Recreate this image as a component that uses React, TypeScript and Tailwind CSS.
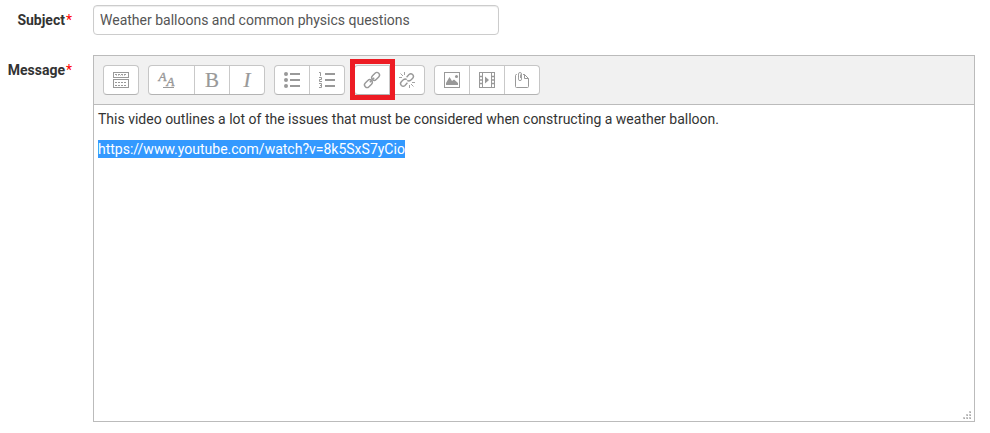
import React from "react";

function Icon({ children }: { children: React.ReactNode }) {
  return (
    <svg width="16" height="16" viewBox="0 0 16 16" fill="none" stroke="#999" className="block shrink-0 overflow-visible">
      {children}
    </svg>
  );
}

function Group({ children }: { children: React.ReactNode }) {
  return (
    <div className="flex h-[30px] divide-x divide-[#c9c9c9] overflow-hidden rounded-[4px] border border-[#c6c6c6] border-b-[#b3b3b3] bg-white">
      {children}
    </div>
  );
}

function Tool({ label, wide, children }: { label: string; wide?: boolean; children: React.ReactNode }) {
  return (
    <button
      type="button"
      aria-label={label}
      className={`box-content flex h-full items-center ${wide ? "w-[36px] pl-[9px]" : "w-[25px] pl-[9px]"}`}
    >
      {children}
    </button>
  );
}

const chain = (
  <g strokeWidth="1.4">
    <rect x="-4.4" y="-2.6" width="8.8" height="5.2" rx="2.6" transform="translate(4.4 11.6) rotate(-45)" />
    <rect x="-4.4" y="-2.6" width="8.8" height="5.2" rx="2.6" transform="translate(11.6 4.4) rotate(-45)" />
    <path d="M5.8 10.2 10.2 5.8" />
  </g>
);

export default function App() {
  return (
    <div className="h-[433px] w-[990px] overflow-hidden bg-white pt-[5px] font-[Roboto,sans-serif] text-[14px] leading-5 text-[#333]">
      <div className="flex">
        <label className="w-[93px] pt-[5px] pr-[21px] text-right font-bold">
          Subject<span className="ml-[1px] font-normal text-[#f00]">*</span>
        </label>
        <div className="h-[30px] w-[406px] rounded-[4px] border border-[#ccc] px-[6px] py-[4px] text-[#555] shadow-[inset_0_1px_1px_rgba(0,0,0,0.075)]">
          Weather balloons and common physics questions
        </div>
      </div>
      <div className="mt-5 flex">
        <label className="w-[93px] pt-[5px] pr-[21px] text-right font-bold">
          Message<span className="ml-[1px] font-normal text-[#f00]">*</span>
        </label>
        <div className="flex h-[367px] w-[882px] flex-col border border-[#bbb]">
          <div className="flex h-[49px] gap-[9px] border-b border-[#bbb] bg-[#f1f1f1] pt-[9px] pl-[9px]">
            <Group>
              <Tool label="Show more buttons">
                <Icon>
                  <rect x=".5" y=".5" width="15" height="5" />
                  <rect x=".5" y="7.5" width="15" height="8" />
                  <path d="M2 2.5H14M2 10.5H14M2 13.5H14" strokeDasharray="2 1" />
                  <path d="M3 3.5H13" strokeDasharray="1 1" opacity=".5" />
                </Icon>
              </Tool>
            </Group>
            <Group>
              <Tool label="Paragraph styles" wide>
                <Icon>
                  <g fill="#999" strokeWidth=".4" fontFamily="Liberation Serif, serif" fontStyle="italic" fontSize="13">
                    <text x="0.5" y="9">A</text>
                    <text x="8.45" y="14">A</text>
                  </g>
                  <path d="M5 15.5H16" />
                </Icon>
              </Tool>
              <Tool label="Bold">
                <Icon>
                  <text x="1" y="15.4" fill="#999" strokeWidth=".2" fontFamily="Liberation Serif, serif" fontSize="21">B</text>
                </Icon>
              </Tool>
              <Tool label="Italic">
                <Icon>
                  <text x="4.5" y="15.4" fill="#999" strokeWidth=".2" fontFamily="Liberation Serif, serif" fontStyle="italic" fontSize="21">I</text>
                </Icon>
              </Tool>
            </Group>
            <Group>
              <Tool label="Unordered list">
                <Icon>
                  <g fill="#999" stroke="none">
                    <circle cx="2" cy="2" r="2" />
                    <circle cx="2" cy="8" r="2" />
                    <circle cx="2" cy="14" r="2" />
                  </g>
                  <path d="M6 2H16M6 8H16M6 14H16" strokeWidth="2" />
                </Icon>
              </Tool>
              <Tool label="Ordered list">
                <Icon>
                  <path d="M0 .5H1.5V4M0 5.5H2.5V7.5H.5V9.5H3M0 11.5H2.5V15.5H0M1 13.5H2.5" />
                  <path d="M6 2H16M6 8H16M6 14H16" strokeWidth="2" />
                </Icon>
              </Tool>
            </Group>
            <div className="relative">
              <Group>
                <Tool label="Link"><Icon>{chain}</Icon></Tool>
                <Tool label="Unlink">
                  <Icon>
                    <path
                      d="M7.6 5.2 10 2.6Q11.8.9 13.6 2.5 15.4 4.3 13.7 6.2L11.4 8.4Q9.8 9.6 8.3 8.4M8.4 10.8 6 13.4Q4.2 15.1 2.4 13.5.6 11.7 2.3 9.8L4.6 7.6Q6.2 6.4 7.7 7.6"
                      strokeWidth="1.4"
                    />
                    <path d="M5.5 0V3M1.5 1.5 4 4M0 5.5H3M10.5 13V16M12 12 14.5 14.5M13 10.5H16" strokeWidth=".9" />
                  </Icon>
                </Tool>
              </Group>
              <div className="absolute -top-[6px] -left-[4px] h-[41px] w-[45px] border-[5px] border-[#ed1c24]" />
            </div>
            <Group>
              <Tool label="Image">
                <Icon>
                  <rect x=".5" y=".5" width="15" height="15" />
                  <path d="M2 13V11L5.5 5 8 9 10 7.5 14 11V13Z" fill="#999" stroke="none" />
                  <circle cx="12.5" cy="4.5" r="1.5" fill="#999" stroke="none" />
                </Icon>
              </Tool>
              <Tool label="Media">
                <Icon>
                  <path d="M.5 0V16M3.5 0V16M12.5 0V16M15.5 0V16M0 .5H16M0 15.5H16" />
                  <path d="M1 4.5H3M1 8H3M1 11.5H3M13 4.5H15M13 8H15M13 11.5H15" strokeWidth="1.3" />
                  <path d="M6 4.5V11.5L10 8Z" fill="#999" stroke="none" />
                </Icon>
              </Tool>
              <Tool label="Manage files">
                <Icon>
                  <path d="M3 2.5H2.5Q1.5 2.5 1.5 3.5V14.5Q1.5 15.5 2.5 15.5H13.5Q14.5 15.5 14.5 14.5V6.5L10.5 2.5H9M10.5 2.5V6.5H14.5" />
                  <path d="M4.5 4V7Q4.5 8.7 6 8.7T7.5 7V2Q7.5.5 6 .5T4.5 2V5M6.5 2.5V6" strokeWidth=".9" />
                </Icon>
              </Tool>
            </Group>
          </div>
          <div className="relative flex-1 px-[4px] pt-[4px]">
            <p>This video outlines a lot of the issues that must be considered when constructing a weather balloon.</p>
            <p className="mt-[11px] flex">
              <span className="h-[18px] bg-[#3399ff] leading-[18px] text-white">https://www.youtube.com/watch?v=8k5SxS7yCio</span>
            </p>
            <svg width="8" height="8" viewBox="0 0 8 8" className="absolute right-[3px] bottom-[2px]">
              <path d="M6 0h2v2H6zM3 3h2v2H3zM6 3h2v2H6zM0 6h2v2H0zM3 6h2v2H3zM6 6h2v2H6z" fill="#c8c8c8" />
              <path d="M7 1h1v1H7zM4 4h1v1H4zM7 4h1v1H7zM1 7h1v1H1zM4 7h1v1H4zM7 7h1v1H7z" fill="#aaa" />
            </svg>
          </div>
        </div>
      </div>
    </div>
  );
}
